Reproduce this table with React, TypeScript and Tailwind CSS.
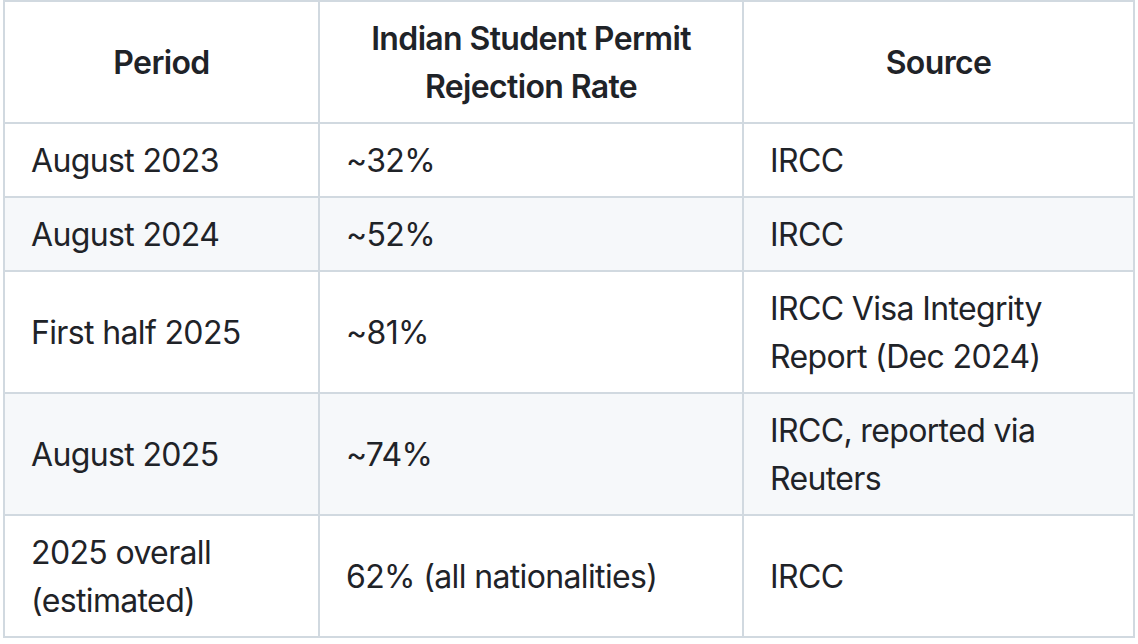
const rows: { period: React.ReactNode; rate: string; source: React.ReactNode }[] = [
  { period: "August 2023", rate: "~32%", source: "IRCC" },
  { period: "August 2024", rate: "~52%", source: "IRCC" },
  {
    period: "First half 2025",
    rate: "~81%",
    source: (
      <>
        IRCC Visa Integrity
        <br />
        Report (Dec 2024)
      </>
    ),
  },
  {
    period: "August 2025",
    rate: "~74%",
    source: (
      <>
        IRCC, reported via
        <br />
        Reuters
      </>
    ),
  },
  {
    period: (
      <>
        2025 overall
        <br />
        (estimated)
      </>
    ),
    rate: "62% (all nationalities)",
    source: "IRCC",
  },
]

const cell = "flex items-center border-r-2 border-b-2 border-[#d1d9e0] px-[26px] pt-[13px] pb-[11px]"

export default function App() {
  return (
    <div className="min-h-screen bg-white font-['Inter','Liberation_Sans',sans-serif] text-[32px] leading-[48px] tracking-[-0.02em] text-[#1f2328]">
      <div className="ml-[3px] grid w-[1132px] grid-cols-[315px_424px_391px] border-t-2 border-l-2 border-[#d1d9e0]">
        <div className={`${cell} justify-center text-center font-semibold`}>Period</div>
        <div className={`${cell} justify-center text-center font-semibold`}>
          Indian Student Permit
          <br />
          Rejection Rate
        </div>
        <div className={`${cell} justify-center text-center font-semibold`}>Source</div>
        {rows.map((r, i) => {
          const bg = i % 2 === 1 ? "bg-[#f6f8fa]" : "bg-white"
          return (
            <div key={i} className="contents">
              <div className={`${cell} ${bg}`}>
                <span>{r.period}</span>
              </div>
              <div className={`${cell} ${bg}`}>
                <span>{r.rate}</span>
              </div>
              <div className={`${cell} ${bg}`}>
                <span>{r.source}</span>
              </div>
            </div>
          )
        })}
      </div>
    </div>
  )
}
